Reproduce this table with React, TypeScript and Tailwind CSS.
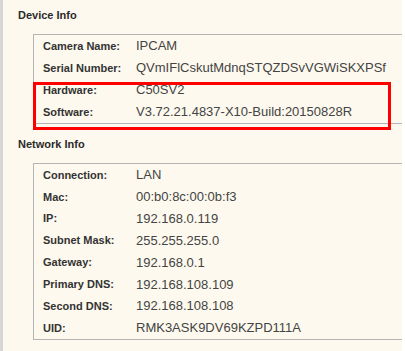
import React from "react";

const DEVICE = [
  ["Camera Name:", "IPCAM"],
  ["Serial Number:", "QVmIFlCskutMdnqSTQZDSvVGWiSKXPSf"],
  ["Hardware:", "C50SV2"],
  ["Software:", "V3.72.21.4837-X10-Build:20150828R"],
];

const NETWORK = [
  ["Connection:", "LAN"],
  ["Mac:", "00:b0:8c:00:0b:f3"],
  ["IP:", "192.168.0.119"],
  ["Subnet Mask:", "255.255.255.0"],
  ["Gateway:", "192.168.0.1"],
  ["Primary DNS:", "192.168.108.109"],
  ["Second DNS:", "192.168.108.108"],
  ["UID:", "RMK3ASK9DV69KZPD111A"],
];

export default function App() {
  return (
    <div className="w-[405px] h-[351px] bg-white overflow-hidden font-['Liberation_Sans',Arial,sans-serif]">
      <div className="relative w-[402px] h-full bg-[#fdf9ee] border-l-[3px] border-[#d6d6d6]">
        <Section title="Device Info" rows={DEVICE} first />
        <Section title="Network Info" rows={NETWORK} />

        {/* highlight around hardware / software */}
        <div className="absolute left-[30px] top-[82px] w-[358px] h-[48px] border-[3px] border-[#ff0000]" />
      </div>
    </div>
  );
}

function Section({
  title,
  rows,
  first,
}: {
  title: string;
  rows: string[][];
  first?: boolean;
}) {
  return (
    <div>
      <div
        className={
          first
            ? "h-[34px] pl-[15px] leading-[30px] text-[11px] font-bold text-[#2b2b2b]"
            : "h-[39px] pt-[5px] pl-[15px] leading-[30px] text-[11px] font-bold text-[#2b2b2b]"
        }
      >
        {title}
      </div>
      <div className="ml-[30px] border-t border-b border-l border-[#b4b4b4] pl-[9px]">
        {rows.map(([label, value]) => (
          <div
            key={label}
            className={first ? "flex items-center h-[22px]" : "flex items-center h-[21.875px]"}
          >
            <span className="w-[93px] shrink-0 text-[11px] font-bold text-[#333333]">
              {label}
            </span>
            <span className="text-[13px] text-[#444444] whitespace-nowrap">{value}</span>
          </div>
        ))}
      </div>
    </div>
  );
}
